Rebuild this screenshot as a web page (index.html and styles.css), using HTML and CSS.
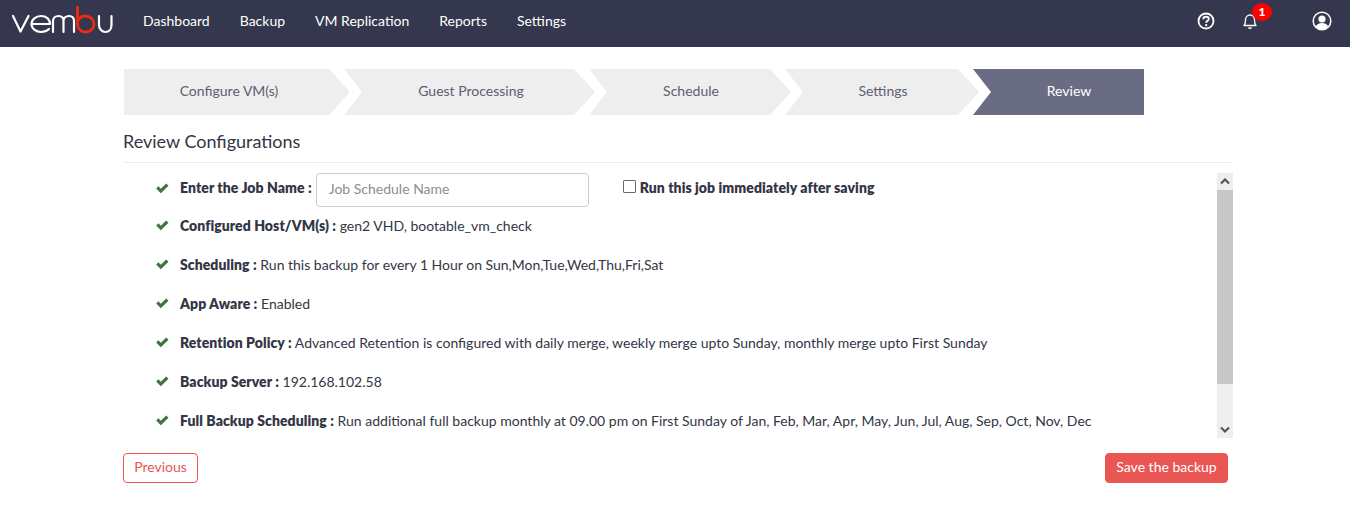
FILE: index.html
```
<!DOCTYPE html>
<html lang="en">
<head>
<meta charset="utf-8">
<title>Review Configurations</title>
<link rel="stylesheet" href="styles.css">
</head>
<body>
<header class="topbar">
  <svg class="logo" width="102" height="30" viewBox="0 -2 102 30" fill="none" stroke-width="2.2" stroke-linecap="round" stroke-linejoin="round">
    <path stroke="#fff" d="M2 8 L9.500 23.500 L17.500 8"/>
    <path stroke="#fff" d="M20.500 16 H39 C39 11 35 8 30 8 C24.800 8 20.500 11.500 20.500 16 C20.500 20.500 24.800 24 30 24 C33.500 24 36 23 38 21"/>
    <path stroke="#fff" d="M42 24 V13 C42 10 44.500 8 47.500 8 C50.500 8 52.500 10 52.500 13 V24 M52.500 13 C52.500 10 55 8 58 8 C61 8 63 10 63 13 V24"/>
    <path stroke="#ee2a12" stroke-width="2.800" d="M66.500 -1 V16 C66.500 20.500 70 24 74.500 24 C79 24 83 20.500 83 16 C83 11.500 79 8 74.500 8 C71 8 68 10 66.500 13"/>
    <path stroke="#fff" d="M88 8 V17 C88 21 91 24 94.500 24 C98 24 100.500 21 100.500 17 V8"/>
  </svg>
  <nav class="mainnav">
    <a class="navlink">Dashboard</a>
    <a class="navlink">Backup</a>
    <a class="navlink">VM Replication</a>
    <a class="navlink">Reports</a>
    <a class="navlink">Settings</a>
  </nav>
  <div class="tools">
    <svg class="tool-help" width="18" height="18" viewBox="0 0 18 18" fill="none" stroke="#fff">
      <circle cx="9" cy="9" r="7.500" stroke-width="1.800"/>
      <path d="M6.300 7.200 C6.300 5.700 7.600 4.700 9 4.700 C10.600 4.700 11.800 5.700 11.800 7 C11.800 8.700 9.200 8.900 9.200 10.700" stroke-width="1.900"/>
      <circle cx="9.200" cy="13.200" r="1.100" fill="#fff" stroke="none"/>
    </svg>
    <div class="bell-wrap">
      <svg width="16" height="18" viewBox="0 0 16 18" fill="none" stroke="#fff" stroke-width="1.300">
        <path d="M2 13.500 C3.500 12 3.500 10.500 3.500 8 C3.500 5 5.500 3 8 3 C10.500 3 12.500 5 12.500 8 C12.500 10.500 12.500 12 14 13.500 Z" stroke-linejoin="round"/>
        <path d="M6.500 15.500 C7 16.500 9 16.500 9.500 15.500" stroke-width="1.500"/>
      </svg>
      <span class="badge">1</span>
    </div>
    <svg class="tool-user" width="20" height="20" viewBox="0 0 20 20">
      <circle cx="10" cy="10" r="8.800" fill="none" stroke="#fff" stroke-width="1.500"/>
      <circle cx="10" cy="8" r="3.600" fill="#fff"/>
      <path d="M3.800 16 C4.500 13 7 12 10 12 C13 12 15.500 13 16.200 16 C14.500 18 12.500 18.800 10 18.800 C7.500 18.800 5.500 18 3.800 16 Z" fill="#fff"/>
    </svg>
  </div>
</header>

<main class="page">
  <ol class="steps">
    <li class="step step-first">Configure VM(s)</li>
    <li class="step step-guest">Guest Processing</li>
    <li class="step step-schedule">Schedule</li>
    <li class="step step-settings">Settings</li>
    <li class="step step-review">Review</li>
  </ol>

  <h1 class="title">Review Configurations</h1>

  <section class="review">
    <ul class="items">
      <li class="item item-job">
        <svg class="check" width="13" height="11" viewBox="0 0 13 11"><path d="M0.200 5.500 L2.400 3.300 L4.800 5.700 L10.200 0.500 L12.500 2.800 L4.800 10.300 Z"/></svg>
        <b class="label">Enter the Job Name :</b>
        <input class="jobname" type="text" placeholder="Job Schedule Name">
        <label class="runnow"><span class="box"></span><b class="label">Run this job immediately after saving</b></label>
      </li>
      <li class="item">
        <svg class="check" width="13" height="11" viewBox="0 0 13 11"><path d="M0.200 5.500 L2.400 3.300 L4.800 5.700 L10.200 0.500 L12.500 2.800 L4.800 10.300 Z"/></svg>
        <span><b class="label">Configured Host/VM(s) :</b> gen2 VHD, bootable_vm_check</span>
      </li>
      <li class="item">
        <svg class="check" width="13" height="11" viewBox="0 0 13 11"><path d="M0.200 5.500 L2.400 3.300 L4.800 5.700 L10.200 0.500 L12.500 2.800 L4.800 10.300 Z"/></svg>
        <span><b class="label">Scheduling :</b> Run this backup for every 1 Hour on Sun,Mon,Tue,Wed,Thu,Fri,Sat</span>
      </li>
      <li class="item">
        <svg class="check" width="13" height="11" viewBox="0 0 13 11"><path d="M0.200 5.500 L2.400 3.300 L4.800 5.700 L10.200 0.500 L12.500 2.800 L4.800 10.300 Z"/></svg>
        <span><b class="label">App Aware :</b> Enabled</span>
      </li>
      <li class="item">
        <svg class="check" width="13" height="11" viewBox="0 0 13 11"><path d="M0.200 5.500 L2.400 3.300 L4.800 5.700 L10.200 0.500 L12.500 2.800 L4.800 10.300 Z"/></svg>
        <span><b class="label">Retention Policy :</b> Advanced Retention is configured with daily merge, weekly merge upto Sunday, monthly merge upto First Sunday</span>
      </li>
      <li class="item">
        <svg class="check" width="13" height="11" viewBox="0 0 13 11"><path d="M0.200 5.500 L2.400 3.300 L4.800 5.700 L10.200 0.500 L12.500 2.800 L4.800 10.300 Z"/></svg>
        <span><b class="label">Backup Server :</b> 192.168.102.58</span>
      </li>
      <li class="item">
        <svg class="check" width="13" height="11" viewBox="0 0 13 11"><path d="M0.200 5.500 L2.400 3.300 L4.800 5.700 L10.200 0.500 L12.500 2.800 L4.800 10.300 Z"/></svg>
        <span><b class="label">Full Backup Scheduling :</b> Run additional full backup monthly at 09.00 pm on First Sunday of Jan, Feb, Mar, Apr, May, Jun, Jul, Aug, Sep, Oct, Nov, Dec</span>
      </li>
    </ul>
    <div class="scrollbar">
      <svg class="arrow" width="16" height="17" viewBox="0 0 16 17" fill="none" stroke="#505050" stroke-width="2"><path d="M4 10.500 L8 6.500 L12 10.500"/></svg>
      <div class="track"><div class="thumb"></div></div>
      <svg class="arrow" width="16" height="17" viewBox="0 0 16 17" fill="none" stroke="#505050" stroke-width="2"><path d="M4 6.500 L8 10.500 L12 6.500"/></svg>
    </div>
  </section>

  <div class="actions">
    <button class="btn btn-outline" type="button">Previous</button>
    <button class="btn btn-solid" type="button">Save the backup</button>
  </div>
</main>
</body>
</html>
```

FILE: styles.css
```
* { box-sizing: border-box; }

html, body {
  margin: 0;
  padding: 0;
  height: 515px;
  overflow: hidden;
  background: #fff;
  color: #333645;
  font-family: Lato, "Liberation Sans", sans-serif;
  font-size: 14px;
  line-height: 20px;
}

.topbar {
  display: flex;
  align-items: center;
  height: 47px;
  padding-bottom: 5px;
  background: #34374d;
  color: #fff;
}

.logo { margin-left: 11px; flex: none; }

.mainnav {
  display: flex;
  gap: 30px;
  margin-left: 30px;
}

.navlink { color: #fff; font-size: 14px; }

.tools {
  display: flex;
  align-items: center;
  margin-left: auto;
  padding-right: 18px;
}

.tool-help { margin-right: 27px; }

.bell-wrap {
  position: relative;
  display: flex;
  margin-right: 54px;
}

.badge {
  position: absolute;
  top: -9px;
  left: 10px;
  width: 20px;
  height: 18px;
  border-radius: 50%;
  background: #f00;
  color: #fff;
  font-size: 12px;
  font-weight: 900;
  line-height: 18px;
  text-align: center;
}

.page { padding: 22px 117px 0 123px; }

.steps {
  display: flex;
  margin: 0 0 0 1px;
  padding: 0;
  list-style: none;
}

.step {
  display: flex;
  align-items: center;
  justify-content: center;
  flex: none;
  height: 46px;
  margin-right: -6px;
  padding-bottom: 2px;
  background: #eee;
  color: #5c5f6e;
  clip-path: polygon(0 0, calc(100% - 21px) 0, 100% 50%, calc(100% - 21px) 100%, 0 100%, 18px 50%);
}

.step-first {
  width: 226px;
  padding-right: 16px;
  clip-path: polygon(0 0, calc(100% - 21px) 0, 100% 50%, calc(100% - 21px) 100%, 0 100%);
}
.step-guest { width: 251px; padding-left: 3px; }
.step-schedule { width: 202px; padding-left: 2px; }
.step-settings { width: 194px; padding-left: 2px; }
.step-review {
  width: 171px;
  margin-right: 0;
  padding-left: 21px;
  background: #6a6c83;
  color: #fff;
  clip-path: polygon(0 0, 100% 0, 100% 100%, 0 100%, 18px 50%);
}

.title {
  margin: 0;
  padding: 16px 0 11px;
  border-bottom: 1px solid #eceded;
  font-size: 18px;
  font-weight: 400;
  line-height: 20px;
  color: #333645;
}

.review {
  display: flex;
  justify-content: space-between;
  height: 265px;
  margin-top: 10px;
}

.items {
  margin: 0;
  padding: 0 0 0 33px;
  list-style: none;
}

.item {
  display: flex;
  align-items: center;
  gap: 11px;
  height: 39px;
}

.item-job {
  height: 30px;
  margin-bottom: 3px;
}

.label { font-weight: 800; letter-spacing: 0.07px; }

.jobname {
  align-self: flex-start;
  flex: none;
  width: 273px;
  height: 34px;
  margin-left: -7px;
  padding: 0 12px 4px;
  border: 1px solid #ccc;
  border-radius: 4px;
  outline: 0;
  background: #fff;
  font: 14px Lato, sans-serif;
}

.jobname::placeholder { color: #8d8d8d; opacity: 1; }

.runnow {
  display: flex;
  align-items: center;
  margin-left: 23px;
  gap: 4px;
}

.box {
  width: 13px;
  height: 13px;
  margin-top: -3px;
  border: 1px solid #6b6b6b;
  border-radius: 1px;
  background: #fff;
}

.check { flex: none; fill: #3c763d; }

.scrollbar {
  display: flex;
  flex-direction: column;
  flex: none;
  width: 16px;
  background: #eee;
}

.arrow { display: block; flex: none; }

.track { flex: 1; }

.thumb {
  height: 194px;
  background: #c8c8c8;
}

.actions {
  display: flex;
  justify-content: space-between;
  padding-right: 5px;
  margin-top: 15px;
}

.btn {
  height: 30px;
  padding: 0 10px 2px;
  border: 1px solid #ea5653;
  border-radius: 4px;
  font: 14px/20px Lato, sans-serif;
}

.btn-outline { width: 75px; background: #fff; color: #ea5653; }
.btn-solid { width: 123px; background: #ea5653; color: #fff; }
```
